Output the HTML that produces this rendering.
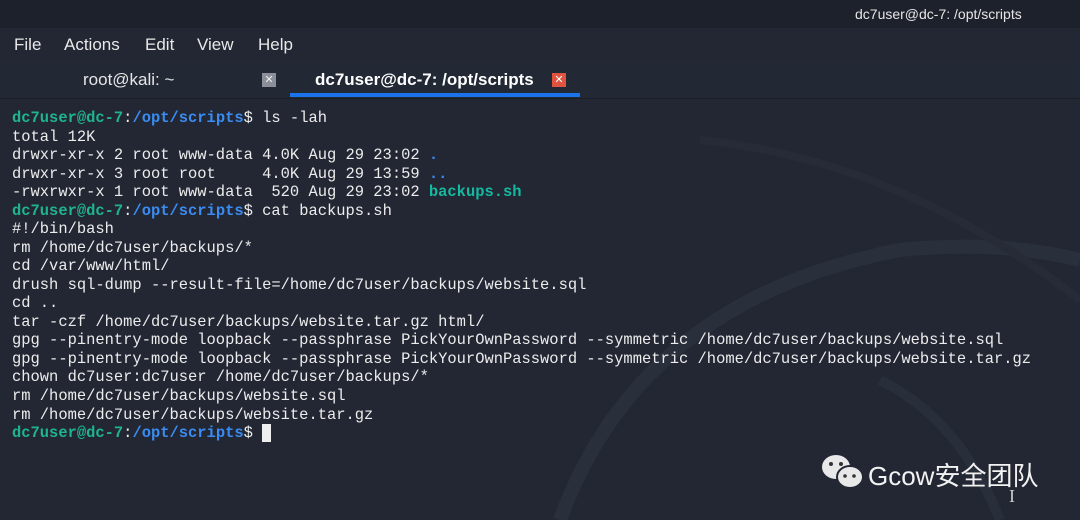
<!DOCTYPE html>
<html><head><meta charset="utf-8"><style>
body{margin:0;width:1080px;height:520px;overflow:hidden;background:#222733;position:relative;font-family:"Liberation Sans",sans-serif}
.top{position:absolute;left:0;top:0;width:1080px;height:28px;background:#1d212b;color:#e6e6e6;font-size:14px}
.menu{position:absolute;top:35px;color:#e8e8e8;font-size:17px}
.tabs{position:absolute;left:0;top:62px;width:1080px;height:36px;background:#232835;border-bottom:1px solid #1a1e27}
.term{position:absolute;left:12px;top:109px;font-family:"Liberation Mono",monospace;font-size:15.45px;line-height:18.53px;color:#ececec;white-space:pre}
.g{color:#1fb48e;font-weight:bold}.b{color:#3a8cf2;font-weight:bold}.c{color:#14b9a0;font-weight:bold}
</style></head><body>
<svg style="position:absolute;left:0;top:0" width="1080" height="520"><path d="M560 520 Q640 300 900 250 Q1000 240 1080 260" stroke="#2a2f3c" stroke-width="14" fill="none"/><path d="M880 380 Q960 420 1000 520" stroke="#292e3b" stroke-width="10" fill="none"/><path d="M700 140 Q900 160 1080 300" stroke="#262b37" stroke-width="8" fill="none"/></svg>
<div class="top"><span style="position:absolute;left:855px;top:6px">dc7user@dc-7: /opt/scripts</span></div>
<div class="menu" style="left:14px">File</div><div class="menu" style="left:64px">Actions</div><div class="menu" style="left:145px">Edit</div><div class="menu" style="left:197px">View</div><div class="menu" style="left:258px">Help</div>
<div class="tabs">
<span style="position:absolute;left:83px;top:8px;color:#e6e6e6;font-size:17px">root@kali: ~</span>
<span style="position:absolute;left:262px;top:11px;width:14px;height:14px;background:#8a8f99;color:#eee;font-size:11px;text-align:center;line-height:14px">✕</span>
<span style="position:absolute;left:315px;top:8px;color:#fff;font-size:17px;font-weight:bold">dc7user@dc-7: /opt/scripts</span>
<span style="position:absolute;left:552px;top:11px;width:14px;height:14px;background:#e0533e;color:#fff;font-size:11px;text-align:center;line-height:14px">✕</span>
<div style="position:absolute;left:290px;top:31px;width:290px;height:4px;background:#1a73e8"></div>
</div>
<div class="term"><span class="g">dc7user@dc-7</span>:<span class="b">/opt/scripts</span>$ ls -lah
total 12K
drwxr-xr-x 2 root www-data 4.0K Aug 29 23:02 <span class="b">.</span>
drwxr-xr-x 3 root root     4.0K Aug 29 13:59 <span class="b">..</span>
-rwxrwxr-x 1 root www-data  520 Aug 29 23:02 <span class="c">backups.sh</span>
<span class="g">dc7user@dc-7</span>:<span class="b">/opt/scripts</span>$ cat backups.sh
#!/bin/bash
rm /home/dc7user/backups/*
cd /var/www/html/
drush sql-dump --result-file=/home/dc7user/backups/website.sql
cd ..
tar -czf /home/dc7user/backups/website.tar.gz html/
gpg --pinentry-mode loopback --passphrase PickYourOwnPassword --symmetric /home/dc7user/backups/website.sql
gpg --pinentry-mode loopback --passphrase PickYourOwnPassword --symmetric /home/dc7user/backups/website.tar.gz
chown dc7user:dc7user /home/dc7user/backups/*
rm /home/dc7user/backups/website.sql
rm /home/dc7user/backups/website.tar.gz
<span class="g">dc7user@dc-7</span>:<span class="b">/opt/scripts</span>$ <span style="background:#eee"> </span></div>
<svg style="position:absolute;left:820px;top:452px" width="46" height="40"><ellipse cx="16" cy="15" rx="14" ry="12" fill="#e8e8e8"/><circle cx="11" cy="12" r="2" fill="#333"/><circle cx="21" cy="12" r="2" fill="#333"/><ellipse cx="30" cy="25" rx="13" ry="11" fill="#e8e8e8" stroke="#222733" stroke-width="2"/><circle cx="25" cy="24" r="1.8" fill="#333"/><circle cx="34" cy="24" r="1.8" fill="#333"/></svg>
<div style="position:absolute;left:868px;top:456px;color:#f2f2f2;font-size:26px;font-family:'Liberation Sans','Noto Sans CJK SC',sans-serif">Gcow安全团队</div>
<div style="position:absolute;left:1009px;top:486px;color:#ccc;font-size:18px;font-family:'Liberation Serif',serif">I</div>
</body></html>
